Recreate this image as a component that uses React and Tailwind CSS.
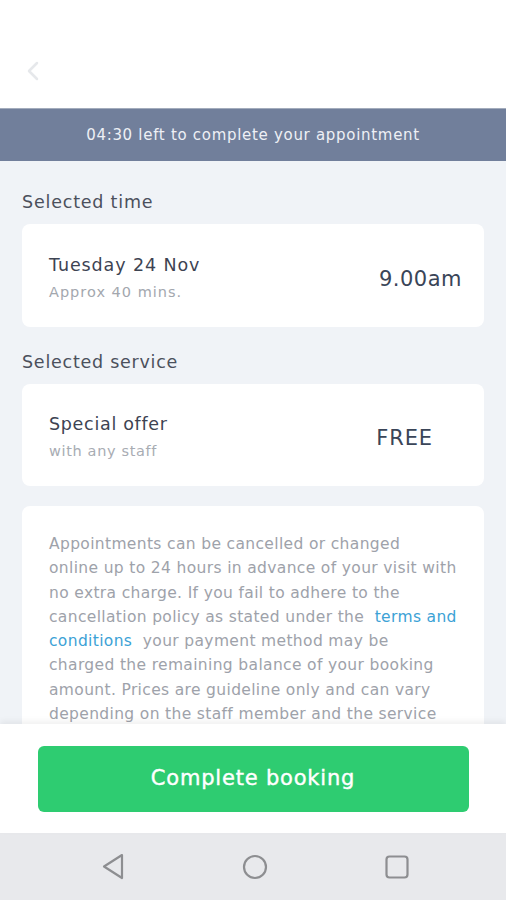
export default function App() {
  return (
    <div className="w-[506px] h-[900px] flex flex-col bg-[#f0f3f7] overflow-hidden font-['DejaVu_Sans','Noto_Sans',sans-serif]">
      {/* Header */}
      <div className="h-[108px] bg-white flex items-center pl-[24px] pt-[34px] shrink-0">
        <svg width="24" height="24" viewBox="0 0 24 24" fill="none" stroke="#e6e8eb" strokeWidth="2.5" strokeLinecap="round" strokeLinejoin="round">
          <path d="M13 4L5 12l8 8" />
        </svg>
      </div>

      {/* Timer banner */}
      <div className="h-[53px] bg-[#717f9b] border-t border-[#a3acbc] flex items-center justify-center shrink-0">
        <span className="text-[15px] tracking-[0.7px] text-[#eef0f5]">04:30 left to complete your appointment</span>
      </div>

      {/* Content */}
      <div className="flex-1 px-[22px] pt-[31px] overflow-hidden">
        <div className="text-[17.5px] tracking-[0.8px] text-[#4b505c] leading-[20px]">Selected time</div>
        <div className="mt-[12px] h-[103px] bg-white rounded-[8px] flex items-center justify-between pl-[27px] pr-[22px]">
          <div className="pt-[3px]">
            <div className="text-[17.5px] tracking-[0.9px] text-[#3d4352] leading-[22px]">Tuesday 24 Nov</div>
            <div className="text-[14.5px] tracking-[1px] text-[#a3a7ae] leading-[18px] mt-[7px]">Approx 40 mins.</div>
          </div>
          <div className="text-[21px] tracking-[0.5px] text-[#3a4558] pt-[8px]">9.00am</div>
        </div>

        <div className="mt-[25px] text-[17.5px] tracking-[0.75px] text-[#4b505c] leading-[20px]">Selected service</div>
        <div className="mt-[12px] h-[102px] bg-white rounded-[8px] flex items-center justify-between pl-[27px] pr-[51px]">
          <div className="pt-[3px]">
            <div className="text-[17.5px] tracking-[0.7px] text-[#3d4352] leading-[22px]">Special offer</div>
            <div className="text-[14.5px] tracking-[0.65px] text-[#a8acb3] leading-[18px] mt-[7px]">with any staff</div>
          </div>
          <div className="text-[21px] tracking-[0.9px] text-[#3a4558] pt-[8px]">FREE</div>
        </div>

        <div className="mt-[20px] bg-white rounded-t-[8px] pl-[27px] pr-[6px] pt-[26px] pb-[20px]">
          <p className="text-[15.5px] tracking-[0.35px] leading-[24.3px] text-[#9ea2aa] whitespace-nowrap">
            Appointments can be cancelled or changed<br />
            online up to 24 hours in advance of your visit with<br />
            no extra charge. If you fail to adhere to the<br />
            cancellation policy as stated under the <span className="text-[#3ca2d6]">&nbsp;terms and</span><br />
            <span className="text-[#3ca2d6]">conditions&nbsp;</span> your payment method may be<br />
            charged the remaining balance of your booking<br />
            amount. Prices are guideline only and can vary<br />
            depending on the staff member and the service
          </p>
        </div>
      </div>

      {/* Bottom action */}
      <div className="h-[109px] bg-white shrink-0 flex items-center justify-center shadow-[0_-3px_6px_rgba(0,0,0,0.06)] relative z-10">
        <button className="w-[431px] h-[66px] bg-[#2ecc71] rounded-[6px] text-white text-[21px] tracking-[0.8px] [-webkit-text-stroke:0.4px_white]">
          Complete booking
        </button>
      </div>

      {/* Android nav */}
      <div className="h-[67px] bg-[#e8e9ec] shrink-0 flex items-center justify-between pl-[102px] pr-[97px]">
        <svg width="22" height="27" viewBox="0 0 22 27" fill="none" stroke="#8d8e91" strokeWidth="2.2" strokeLinejoin="round">
          <path d="M20 2L2 13.5 20 25z" />
        </svg>
        <svg width="26" height="26" viewBox="0 0 26 26" fill="none" stroke="#8d8e91" strokeWidth="2.2">
          <circle cx="13" cy="13" r="11" />
        </svg>
        <svg width="24" height="24" viewBox="0 0 24 24" fill="none" stroke="#8d8e91" strokeWidth="2.2">
          <rect x="1.5" y="1.5" width="21" height="21" rx="3" />
        </svg>
      </div>
    </div>
  );
}
